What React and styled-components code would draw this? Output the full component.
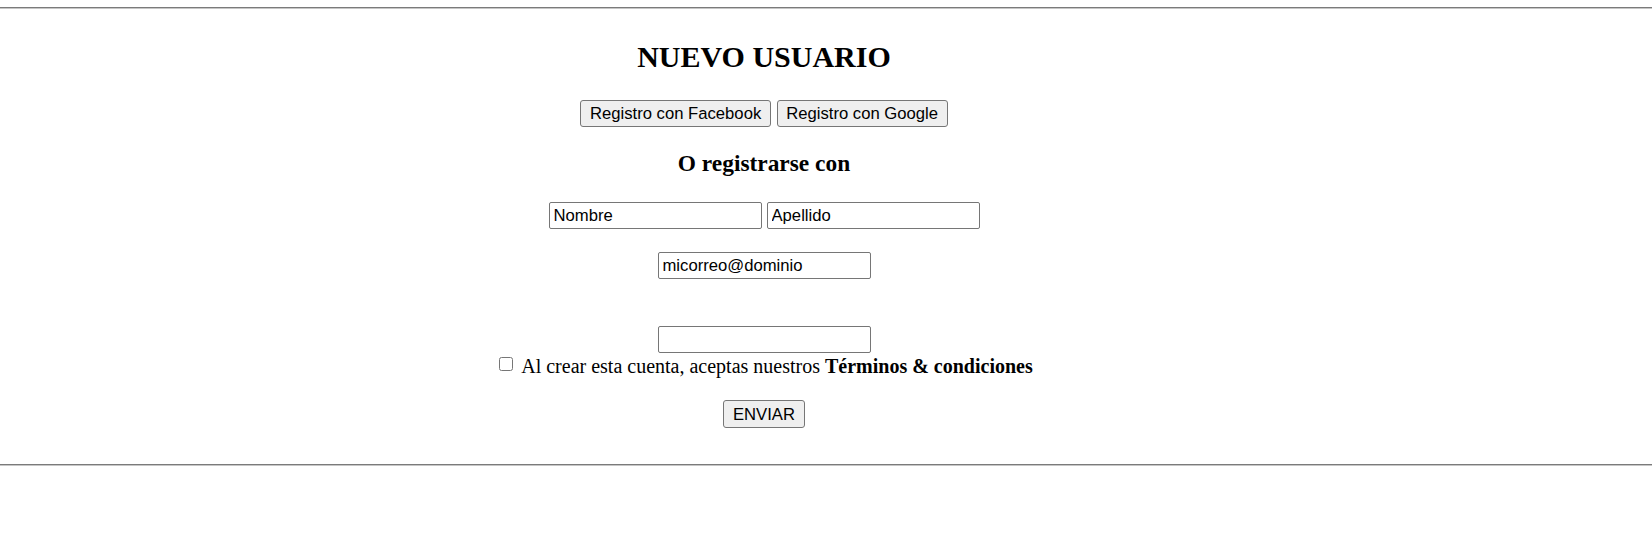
import React from "react";
import styled, { createGlobalStyle } from "styled-components";

const GlobalStyle = createGlobalStyle`
  html, body {
    margin: 0;
    padding: 0;
    background: #ffffff;
  }
  body {
    font-family: "Liberation Serif", "Times New Roman", serif;
    color: #000000;
  }
`;

const Page = styled.div`
  display: flex;
  flex-direction: column;
  padding-top: 7px;
  min-height: 546px;
  box-sizing: border-box;
`;

const Rule = styled.hr`
  margin: ${(p) => p.$top || 0}px 0 0 0;
  height: 0;
  border: none;
  border-top: 1px solid #7b7b7b;
  border-bottom: 1px solid #c6c6c6;
  width: 100%;
`;

const Form = styled.form`
  width: 1528px;
  display: flex;
  flex-direction: column;
  align-items: center;
  margin: 0;
`;

const Title = styled.h2`
  margin: 30px 0 0 0;
  font-size: 30px;
  line-height: 35px;
  font-weight: bold;
`;

const Subtitle = styled.h3`
  margin: 23px 0 0 0;
  font-size: 23.4px;
  line-height: 27px;
  font-weight: bold;
`;

const Row = styled.div`
  display: flex;
  justify-content: center;
  align-items: center;
  gap: ${(p) => p.$gap ?? 5}px;
  margin-top: ${(p) => p.$top}px;
`;

const Button = styled.button`
  font-family: "Liberation Sans", Arial, sans-serif;
  font-size: 16.67px;
  line-height: 19px;
  height: ${(p) => p.$h || 27}px;
  padding: 0 ${(p) => p.$px || 8.5}px;
  box-sizing: border-box;
  background: #efefef;
  color: #000000;
  border: 1px solid #767676;
  border-radius: 3px;
  margin: 0;
  cursor: default;
`;

const Input = styled.input`
  font-family: "Liberation Sans", Arial, sans-serif;
  font-size: 16.67px;
  width: 213px;
  height: 27px;
  box-sizing: border-box;
  padding: 0 4px;
  border: 1px solid #767676;
  border-radius: 2px;
  background: #ffffff;
  color: #000000;
  margin: 0;
  outline: none;
`;

const Checkbox = styled.input`
  width: 14px;
  height: 14px;
  margin: 2px 0 0 0;
`;

const Terms = styled.label`
  display: flex;
  align-items: flex-start;
  gap: 8px;
  font-size: 20px;
  line-height: 23px;
  margin: 2px 0 0 4px;
`;

const Strong = styled.b`
  font-weight: bold;
`;

export default function App() {
  return (
    <>
      <GlobalStyle />
      <Page>
        <Rule />
        <Form onSubmit={(e) => e.preventDefault()}>
          <Title>NUEVO USUARIO</Title>
          <Row $top={26} $gap={6}>
            <Button type="button">Registro con Facebook</Button>
            <Button type="button">Registro con Google</Button>
          </Row>
          <Subtitle>O registrarse con</Subtitle>
          <Row $top={25}>
            <Input type="text" defaultValue="Nombre" />
            <Input type="text" defaultValue="Apellido" />
          </Row>
          <Row $top={23}>
            <Input type="email" defaultValue="micorreo@dominio" />
          </Row>
          <Row $top={47}>
            <Input type="password" />
          </Row>
          <Terms>
            <Checkbox type="checkbox" />
            <span>
              Al crear esta cuenta, aceptas nuestros{" "}
              <Strong>Términos &amp; condiciones</Strong>
            </span>
          </Terms>
          <Row $top={22}>
            <Button type="submit" $h={28} $px={9}>
              ENVIAR
            </Button>
          </Row>
        </Form>
        <Rule $top={36} />
      </Page>
    </>
  );
}
